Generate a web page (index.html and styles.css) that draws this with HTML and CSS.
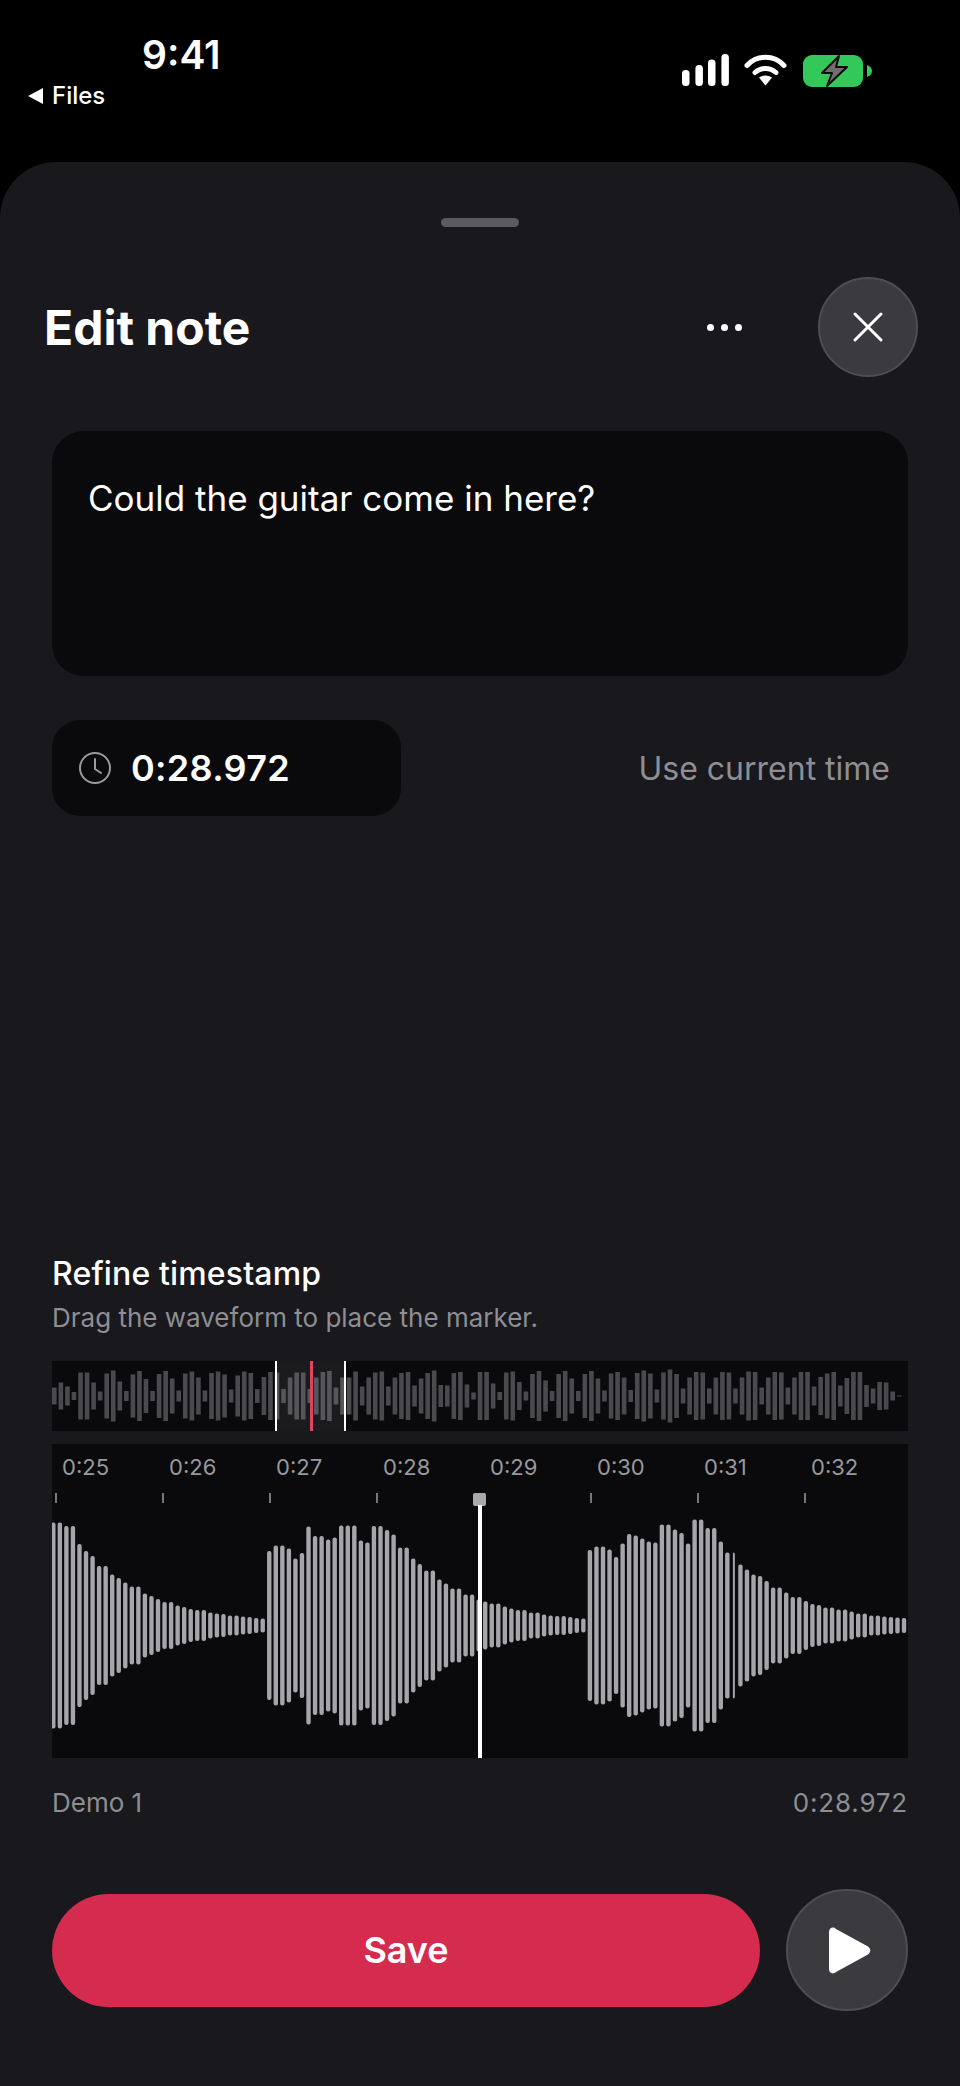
FILE: index.html
```html
<!DOCTYPE html>
<html lang="en">
<head>
  <meta charset="UTF-8" />
  <meta name="viewport" content="width=device-width, initial-scale=1.0" />
  <title>Edit note</title>
  <link rel="stylesheet" href="styles.css">
</head>
<body>
  <div class="status-bar">
    <div class="status-left">
      <div class="clock-time">9:41</div>
      <div class="back-link"><span class="back-arrow"></span>Files</div>
    </div>
    <div class="status-icons">
      <svg class="icon-signal" viewBox="0 0 48 32" fill="#fff">
        <rect x="0" y="16" width="7.5" height="16" rx="3.5" />
        <rect x="13.4" y="11" width="7.5" height="21" rx="3.5" />
        <rect x="26" y="5.4" width="7.5" height="26.6" rx="3.5" />
        <rect x="39.4" y="0" width="7.5" height="32" rx="3.5" />
      </svg>
      <svg class="icon-wifi" viewBox="0 0 43 32" fill="none" stroke="#fff" stroke-width="5" stroke-linecap="round">
        <path d="M3 11.5C13 0.5 30 0.5 40 11.5" />
        <path d="M11 18.5C17 13 26 13 32 18.5" />
        <path d="M15 23.5Q21.5 19.5 28 23.5L21.5 31.5Z" fill="#fff" stroke="none" />
      </svg>
      <svg class="icon-battery" viewBox="0 0 69 34">
        <rect x="0" y="1" width="60" height="32" rx="9" fill="#34c759" />
        <path d="M64 11C67 12 69 14 69 17C69 20 67 22 64 23Z" fill="#34c759" />
        <path d="M36 2L19 19H29L24 32L44 13H33Z" fill="#6f6f72" stroke="#0a0a0a" stroke-width="2" stroke-linejoin="round" />
      </svg>
    </div>
  </div>

  <div class="sheet">
    <div class="handle"></div>

    <div class="sheet-header">
      <h1>Edit note</h1>
      <div class="more-btn"><span></span><span></span><span></span></div>
      <div class="round-btn close-btn">
        <svg viewBox="0 0 30 30" width="30" height="30" fill="none" stroke="#fff" stroke-width="3" stroke-linecap="round">
          <path d="M2 2L28 28M28 2L2 28" />
        </svg>
      </div>
    </div>

    <div class="sheet-body">
      <div class="note-box">Could the guitar come in here?</div>

      <div class="time-row">
        <div class="time-chip">
          <svg viewBox="0 0 32 32" width="32" height="32" fill="none" stroke="#9a9a9f" stroke-width="2" stroke-linecap="round" stroke-linejoin="round">
            <circle cx="16" cy="16" r="15" />
            <path d="M16 7V17L22 21" />
          </svg>
          <span>0:28.972</span>
        </div>
        <div class="use-current">Use current time</div>
      </div>

      <div class="refine">
        <h2>Refine timestamp</h2>
        <p>Drag the waveform to place the marker.</p>

        <div class="overview">
          <svg class="bars overview-bars" id="overviewBars" width="856" height="70"></svg>
          <div class="overview-window"></div>
          <div class="overview-marker"></div>
        </div>

        <div class="detail">
          <div class="ruler">
            <div class="ruler-cell"><span>0:25</span><i></i></div>
            <div class="ruler-cell"><span>0:26</span><i></i></div>
            <div class="ruler-cell"><span>0:27</span><i></i></div>
            <div class="ruler-cell"><span>0:28</span><i></i></div>
            <div class="ruler-cell"><span>0:29</span><i></i></div>
            <div class="ruler-cell"><span>0:30</span><i></i></div>
            <div class="ruler-cell"><span>0:31</span><i></i></div>
            <div class="ruler-cell"><span>0:32</span><i></i></div>
          </div>
          <svg class="bars detail-bars" id="detailBars" width="856" height="245"></svg>
          <div class="playhead-cap"></div>
          <div class="playhead"></div>
        </div>

        <div class="track-info">
          <span>Demo 1</span>
          <span class="track-time">0:28.972</span>
        </div>
      </div>

      <div class="actions">
        <div class="save-btn">Save</div>
        <div class="round-btn play-btn">
          <svg viewBox="0 0 42 47" width="42" height="47" fill="#fff">
            <path d="M0 5C0 1 4 -1 7 2L39 19.500C42 22 42 25 39 27.500L7 45C4 48 0 46 0 42Z" />
          </svg>
        </div>
      </div>
    </div>
  </div>

  <script src="wave.js"></script>
</body>
</html>
```

FILE: styles.css
```css
* {
  box-sizing: border-box;
  margin: 0;
  padding: 0;
}

body {
  font-family: 'Inter', 'Liberation Sans', sans-serif;
  background: #000000;
  color: #ffffff;
  width: 960px;
  height: 2086px;
  overflow: hidden;
}

/* status bar */
.status-bar {
  height: 162px;
  display: flex;
  justify-content: space-between;
  padding: 32px 88px 0 28px;
}

.clock-time {
  font-size: 39px;
  font-weight: 600;
  line-height: 46px;
  margin-left: 114px;
}

.back-link {
  display: flex;
  align-items: center;
  gap: 9px;
  font-size: 24px;
  font-weight: 500;
  line-height: 30px;
  margin-top: 3px;
}

.back-arrow {
  width: 0;
  height: 0;
  border-style: solid;
  border-width: 8px 15px 8px 0;
  border-color: transparent #ffffff transparent transparent;
}

.status-icons {
  display: flex;
  align-items: flex-start;
  padding-top: 22px;
}

.icon-signal {
  width: 48px;
  height: 32px;
  margin-right: 14px;
}

.icon-wifi {
  width: 43px;
  height: 32px;
  margin-right: 16px;
}

.icon-battery {
  width: 69px;
  height: 34px;
}

/* sheet */
.sheet {
  height: 1924px;
  background: #18181d;
  border-radius: 56px 56px 0 0;
  display: flex;
  flex-direction: column;
  padding-top: 56px;
}

.handle {
  width: 78px;
  height: 9px;
  background: #5a5a5f;
  border-radius: 5px;
  margin: 0 auto;
}

.sheet-header {
  display: flex;
  align-items: center;
  height: 100px;
  margin-top: 50px;
  padding: 0 42px 0 44px;
}

.sheet-header h1 {
  font-size: 48px;
  font-weight: 700;
  flex: 1;
}

.more-btn {
  display: flex;
  gap: 7px;
  margin-right: 76px;
}

.more-btn span {
  width: 7px;
  height: 7px;
  background: #ffffff;
  border-radius: 50%;
}

.round-btn {
  display: flex;
  align-items: center;
  justify-content: center;
  background: #3a3a3f;
  border: 2px solid #4d4d52;
  border-radius: 50%;
  flex-shrink: 0;
}

.close-btn {
  width: 100px;
  height: 100px;
}

.sheet-body {
  flex: 1;
  display: flex;
  flex-direction: column;
  padding: 54px 52px 75px;
}

.note-box {
  height: 245px;
  background: #0a0a0d;
  border-radius: 32px;
  padding: 44px 36px;
  font-size: 35px;
  line-height: 46px;
}

.time-row {
  display: flex;
  align-items: center;
  justify-content: space-between;
  margin-top: 44px;
  padding-right: 18px;
}

.time-chip {
  width: 349px;
  height: 96px;
  background: #0a0a0d;
  border-radius: 28px;
  display: flex;
  align-items: center;
  gap: 20px;
  padding-left: 27px;
  font-size: 36px;
  font-weight: 600;
  letter-spacing: 0.3px;
}

.use-current {
  font-size: 32px;
  color: #8e8e93;
}

/* refine section */
.refine {
  margin-top: auto;
}

.refine h2 {
  font-size: 32px;
  font-weight: 500;
  line-height: 40px;
  letter-spacing: 0.15px;
}

.refine p {
  font-size: 26px;
  line-height: 36px;
  margin-top: 6px;
  color: #8e8e93;
}

.bars {
  display: block;
}

.overview {
  position: relative;
  height: 70px;
  margin-top: 25px;
  background: #0a0a0d;
}

.overview-bars rect {
  fill: #4a4a4e;
}

.overview-window {
  position: absolute;
  top: 0;
  bottom: 0;
  left: 223px;
  width: 71px;
  background: rgba(255, 255, 255, 0.07);
  border-left: 2.500px solid #ffffff;
  border-right: 2.500px solid #ffffff;
}

.overview-marker {
  position: absolute;
  top: 0;
  bottom: 0;
  left: 258px;
  width: 3px;
  background: #e0455f;
}

.detail {
  position: relative;
  height: 314px;
  margin-top: 13px;
  background: #0a0a0d;
  overflow: hidden;
}

.ruler {
  display: flex;
  height: 59px;
}

.ruler-cell {
  width: 107px;
  flex-shrink: 0;
  display: flex;
  flex-direction: column;
  padding: 9px 0 0 3px;
}

.ruler-cell span {
  font-size: 22px;
  line-height: 28px;
  color: #98989d;
  margin-left: 7px;
}

.ruler-cell i {
  width: 2px;
  height: 10px;
  margin-top: 12px;
  background: #77777b;
}

.detail-bars rect {
  fill: #a5a5aa;
}

.playhead-cap {
  position: absolute;
  top: 49px;
  left: 421px;
  width: 13px;
  height: 13px;
  background: #a9a9ad;
  border-radius: 2px;
}

.playhead {
  position: absolute;
  top: 61px;
  bottom: 0;
  left: 425.500px;
  width: 4.500px;
  background: #ffffff;
}

.track-info {
  display: flex;
  justify-content: space-between;
  margin-top: 28px;
  font-size: 26px;
  line-height: 34px;
  color: #8e8e93;
}

.track-time {
  letter-spacing: 0.8px;
}

.actions {
  display: flex;
  align-items: center;
  gap: 26px;
  margin-top: 69px;
}

.save-btn {
  flex: 1;
  height: 113px;
  background: #d42b4f;
  border-radius: 57px;
  display: flex;
  align-items: center;
  justify-content: center;
  font-size: 36px;
  font-weight: 600;
}

.play-btn {
  width: 122px;
  height: 122px;
  padding-left: 6px;
}
```

FILE: wave.js
```js
const overview = [
  17, 27, 19, 8, 47, 47, 27, 9, 45, 51, 29, 10, 43, 50, 34, 10, 44, 50, 35, 11,
  45, 49, 37, 11, 46, 49, 43, 13, 41, 49, 46, 14, 38, 48, 47, 14, 37, 47, 47, 14,
  37, 48, 50, 17, 37, 37, 49, 19, 37, 47, 49, 19, 37, 46, 48, 21, 35, 46, 51, 22,
  21, 46, 48, 23, 7,
  48, 48, 25, 8, 47, 49, 28, 9, 44, 50, 31, 10, 44, 50, 35, 10, 44, 50, 35, 11,
  45, 48, 37, 12, 46, 51, 45, 13, 47, 53, 44, 15, 37, 48, 47, 15, 37, 48, 47, 15,
  37, 49, 48, 17, 37, 48, 47, 17, 37, 48, 48, 19, 38, 45, 48, 21, 36, 48, 48, 22,
  15, 28, 27, 9, 1
];

const detail = [
  206, 206, 199, 199, 163, 149, 139, 119, 119, 102, 95, 86, 78, 78, 64, 59, 53,
  47, 47, 40, 37, 33, 31, 31, 26, 24, 23, 20, 20, 18, 17, 15, 14,
  149, 160, 160, 154, 134, 145, 198, 179, 179, 172, 176, 200, 200, 200, 170, 166,
  199, 199, 191, 182, 156, 156, 134, 123, 110, 110, 92, 84, 74, 74, 62, 62, 52,
  48, 44, 44, 38, 34, 31, 31, 26, 26, 22, 20, 19, 19, 17, 15, 14,
  151, 158, 158, 152, 137, 164, 183, 180, 174, 168, 166, 202, 202, 192, 185, 164,
  212, 212, 195, 195, 168, 146, 146, 122, 112, 102, 99, 89, 76, 76, 66, 57, 57,
  49, 43, 41, 36, 36, 32, 32, 28, 24, 24, 20, 20, 18, 17, 16, 15
];

// this one bar is narrower in the design
const thinBar = 104;

function drawBars(id, heights, opts) {
  const svg = document.getElementById(id);
  const mid = svg.getAttribute("height") / 2;
  heights.forEach((h, index) => {
    const w = id === "detailBars" && index === thinBar ? 2 : opts.width;
    const rect = document.createElementNS("http://www.w3.org/2000/svg", "rect");
    rect.setAttribute("x", opts.center + index * opts.step - w / 2);
    rect.setAttribute("y", mid - h / 2);
    rect.setAttribute("width", w);
    rect.setAttribute("height", h);
    rect.setAttribute("rx", opts.round);
    svg.appendChild(rect);
  });
}

drawBars("overviewBars", overview, { center: 2.3, step: 6.55, width: 4.6, round: 0 });
drawBars("detailBars", detail, { center: 1.3, step: 6.544, width: 4.4, round: 2 });
```
